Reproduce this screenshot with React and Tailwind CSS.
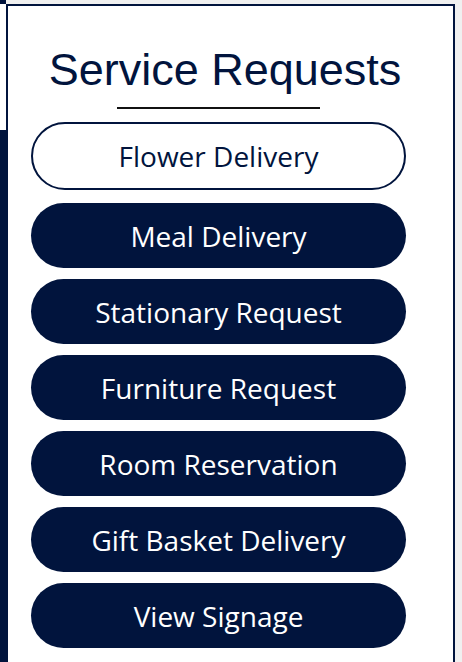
const services = [
  "Meal Delivery",
  "Stationary Request",
  "Furniture Request",
  "Room Reservation",
  "Gift Basket Delivery",
  "View Signage",
];

export default function App() {
  return (
    <div className="flex h-[662px] w-[462px] overflow-hidden bg-white">
      {/* left edge strip */}
      <div className="flex w-[6px] flex-col">
        <div className="h-[4px] bg-[#01143d]" />
        <div className="h-[126px] bg-white" />
        <div className="flex-1 bg-[#01143d]" />
      </div>

      <div className="flex flex-1 flex-col">
        <div className="h-[4px] bg-[#f0f0f0]" />
        <div className="flex flex-1">
          <div className="flex-1 border-2 border-b-0 border-[#01143d] bg-white">
            <div className="ml-[23px] flex w-[375px] flex-col">
              <h1 className="mt-[39px] pl-[13px] text-center font-['Liberation_Sans',Arial,sans-serif] text-[45px] leading-[50px] text-[#01143d]">
                Service Requests
              </h1>
              <div className="mx-auto mt-[12px] h-[2px] w-[203px] bg-[#111111]" />
              <button className="mt-[13px] h-[68px] rounded-full border-2 border-[#01143d] bg-white font-['Open_Sans',sans-serif] text-[28px] text-[#01143d]">
                Flower Delivery
              </button>
              <div className="mt-[13px] flex flex-col gap-[11px]">
                {services.map((s) => (
                  <button
                    key={s}
                    className="h-[65px] rounded-full bg-[#01143d] font-['Open_Sans',sans-serif] text-[28px] text-white"
                  >
                    {s}
                  </button>
                ))}
              </div>
            </div>
          </div>
          <div className="w-[7px] bg-[#f0f0f0]" />
        </div>
      </div>
    </div>
  );
}
